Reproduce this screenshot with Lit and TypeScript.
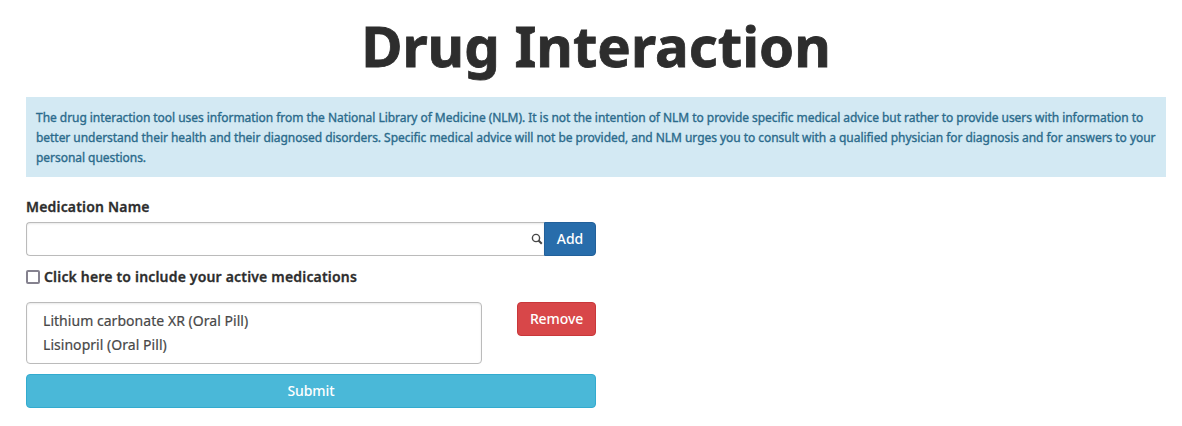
import { LitElement, html, css } from "lit";
import { customElement, state } from "lit/decorators.js";

@customElement("app-root")
export class AppRoot extends LitElement {
  @state() private medications = ["Lithium carbonate XR (Oral Pill)", "Lisinopril (Oral Pill)"];

  static styles = css`
    :host {
      display: block;
      box-sizing: border-box;
      height: 426px;
      padding: 7px 16px 0 26px;
      overflow: hidden;
      background: #fff;
      color: #2d2d2d;
      font-family: "Noto Sans", sans-serif;
      font-size: 14px;
      line-height: 20px;
    }
    * { box-sizing: border-box; }
    h1 {
      margin: 0 0 14px;
      font-size: 56.3px;
      font-weight: 700;
      line-height: 76px;
      text-align: center;
      white-space: nowrap;
      -webkit-text-stroke: 0.8px currentColor;
    }
    .notice {
      height: 80px;
      padding: 11px 10px 9px;
      background: #d3e9f3;
      color: #2b6b8c;
      font-size: 12px;
      font-weight: 400;
      letter-spacing: -0.045px;
      font-variant-ligatures: none;
      -webkit-text-stroke: 0.35px currentColor;
    }
    .line { display: block; width: max-content; white-space: nowrap; }
    .form { width: 570px; margin-top: 20px; }
    .label { display: block; font-weight: 600; letter-spacing: 0.18px; -webkit-text-stroke: 0.3px currentColor; }
    .group { display: flex; height: 34px; margin-top: 5px; }
    .field {
      flex: 1;
      display: flex;
      align-items: center;
      justify-content: flex-end;
      padding-right: 1px;
      border: 1px solid #bbb;
      border-right: 0;
      border-radius: 4px 0 0 4px;
      box-shadow: inset 0 1px 2px rgba(0, 0, 0, 0.09);
    }
    button {
      height: 34px;
      padding: 0;
      border: 1px solid;
      border-radius: 4px;
      color: #fff;
      font: 500 14px/20px "Noto Sans", sans-serif;
    }
    .add { width: 52px; border-radius: 0 4px 4px 0; background: #286dab; border-color: #22609a; }
    .check { display: flex; align-items: center; gap: 4px; height: 20px; margin-top: 11px; font-weight: 600; letter-spacing: 0.18px; -webkit-text-stroke: 0.3px currentColor; }
    .box { width: 14px; height: 14px; border: 2px solid #85828f; border-radius: 2px; }
    .row { display: flex; justify-content: space-between; margin-top: 15px; }
    .list {
      width: 456px;
      height: 62px;
      padding: 6px 16px;
      border: 1px solid #bbb;
      border-radius: 4px;
      color: #484848;
      line-height: 24px;
      letter-spacing: 0.04px;
      -webkit-text-stroke: 0.2px currentColor;
      box-shadow: inset 0 1px 2px rgba(0, 0, 0, 0.09);
    }
    .remove { width: 79px; background: #d84749; border-color: #c9373a; letter-spacing: -0.1px; }
    .submit { width: 100%; margin-top: 10px; background: #4ab8d8; border-color: #33abcf; letter-spacing: -0.1px; }
  `;

  render() {
    return html`
      <h1>Drug Interaction</h1>
      <div class="notice">
        <span class="line">The drug interaction tool uses information from the National Library of Medicine (NLM). It is not the intention of NLM to provide specific medical advice but rather to provide users with information to</span>
        <span class="line">better understand their health and their diagnosed disorders. Specific medical advice will not be provided, and NLM urges you to consult with a qualified physician for diagnosis and for answers to your</span>
        <span class="line">personal questions.</span>
      </div>
      <div class="form">
        <span class="label">Medication Name</span>
        <div class="group">
          <div class="field">
            <svg width="12" height="12" viewBox="0 0 12 12" fill="none" stroke="#484848">
              <circle cx="5" cy="5" r="3.6" stroke-width="1.4" />
              <path d="M7.5 7.5L10.8 10.7" stroke-width="2.1" />
            </svg>
          </div>
          <button class="add">Add</button>
        </div>
        <div class="check"><span class="box"></span><span>Click here to include your active medications</span></div>
        <div class="row">
          <div class="list">${this.medications.map((m) => html`<div>${m}</div>`)}</div>
          <button class="remove">Remove</button>
        </div>
        <button class="submit">Submit</button>
      </div>
    `;
  }
}
